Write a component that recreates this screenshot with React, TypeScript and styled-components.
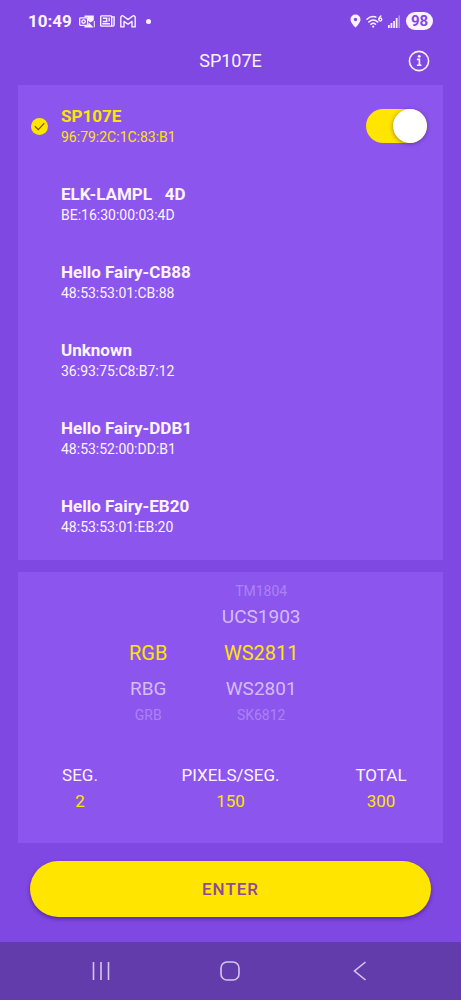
import { useState } from "react";
import styled, { createGlobalStyle } from "styled-components";

const color = {
  page: "#8048e3",
  panel: "#8c56ee",
  accent: "#ffe500",
  text: "#fcf3ff",
  nav: "#633cab",
  navIcon: "#d6c4f2",
};

const GlobalStyle = createGlobalStyle`
  *, *::before, *::after { box-sizing: border-box; }
  body {
    margin: 0;
    background: ${color.page};
    color: ${color.text};
    font-family: Roboto, "Liberation Sans", sans-serif;
  }
  button, input { font: inherit; color: inherit; }
  button { border: 0; padding: 0; background: none; cursor: pointer; }
`;

const Screen = styled.div`
  display: flex;
  flex-direction: column;
  min-height: 100vh;
`;

const StatusBar = styled.div`
  display: flex;
  align-items: center;
  justify-content: space-between;
  height: 42px;
  padding: 0 28px;
`;

const StatusGroup = styled.div`
  display: flex;
  align-items: center;
  gap: 5px;
`;

const Clock = styled.time`
  font: 700 17px/20px Roboto, sans-serif;
  margin-right: 2px;
`;

const Dot = styled.span`
  width: 5px;
  height: 5px;
  margin-left: 5px;
  border-radius: 50%;
  background: ${color.text};
`;

const Battery = styled.span`
  width: 27px;
  border-radius: 9px;
  background: ${color.text};
  color: ${color.page};
  font-size: 15px;
  font-weight: 700;
  line-height: 18px;
  text-align: center;
`;

const Header = styled.header`
  display: grid;
  grid-template-columns: 1fr auto 1fr;
  align-items: center;
  height: 38px;
  padding: 0 31px;
`;

const Title = styled.h1`
  grid-column: 2;
  margin: 0;
  font-size: 18px;
  font-weight: 400;
  line-height: 24px;
`;

const InfoButton = styled.button`
  display: flex;
  justify-self: end;
`;

const Main = styled.main`
  display: flex;
  flex-direction: column;
  gap: 12px;
  padding: 5px 18px 25px;
`;

const Panel = styled.section`
  background: ${color.panel};
`;

const DeviceList = styled.ul`
  margin: 0;
  padding: 2px 16px 5px 13px;
  list-style: none;
`;

const DeviceItem = styled.li`
  display: flex;
  align-items: center;
  height: 78px;
`;

const DeviceLabel = styled.label<{ $active: boolean }>`
  display: flex;
  flex: 1;
  align-items: center;
  gap: 13px;
  color: ${(p) => (p.$active ? color.accent : color.text)};
  cursor: pointer;
`;

const RadioMark = styled.span`
  display: grid;
  width: 17px;
  height: 17px;
  & > * { grid-area: 1 / 1; }
`;

const Radio = styled.input`
  appearance: none;
  width: 17px;
  height: 17px;
  margin: 0;
  border-radius: 50%;
  &:checked { background: ${color.accent}; }
  & + svg { visibility: hidden; }
  &:checked + svg { visibility: visible; }
`;

const DeviceText = styled.span`
  display: flex;
  flex-direction: column;
`;

const DeviceName = styled.span`
  font-size: 17px;
  font-weight: 700;
  line-height: 22px;
  white-space: pre;
`;

const DeviceAddress = styled.span`
  font-size: 14px;
  line-height: 20px;
`;

const Switch = styled.input`
  appearance: none;
  display: flex;
  width: 61px;
  height: 34px;
  margin: 0;
  border-radius: 17px;
  background: #6d3fc4;
  cursor: pointer;
  &::before {
    content: "";
    width: 34px;
    height: 34px;
    border-radius: 50%;
    background: #fff;
    box-shadow: 0 1px 4px rgba(60, 20, 110, 0.5);
  }
  &:checked {
    justify-content: flex-end;
    background: ${color.accent};
  }
`;

const Pickers = styled.div`
  display: grid;
  grid-template-columns: 1fr 113px 113px 1.7fr;
  align-items: end;
  padding-top: 11px;
`;

const Wheel = styled.div<{ $column: number }>`
  grid-column: ${(p) => p.$column};
  display: flex;
  flex-direction: column;
`;

const wheelSize = [20, 19, 14];
const wheelColor = [color.accent, "#d5bbf8", "#ab82f2"];

const WheelOption = styled.button<{ $distance: number }>`
  height: ${(p) => (p.$distance === 2 ? 16 : 36)}px;
  color: ${(p) => wheelColor[p.$distance]};
  font-size: ${(p) => wheelSize[p.$distance]}px;
  line-height: 16px;
`;

const Stats = styled.div`
  display: flex;
  justify-content: space-between;
  padding: 39px 13px 29px;
`;

const Stat = styled.div`
  display: flex;
  flex-direction: column;
  width: 98px;
  font-size: 17px;
  line-height: 26px;
  text-align: center;
`;

const StatInput = styled.input`
  width: 100%;
  height: 26px;
  padding: 0;
  border: 0;
  background: none;
  color: ${color.accent};
  text-align: center;
`;

const StatOutput = styled.output`
  color: ${color.accent};
`;

const EnterButton = styled.button`
  height: 56px;
  margin: 6px 12px 0;
  border-radius: 28px;
  background: ${color.accent};
  box-shadow: 0 2px 4px rgba(50, 15, 100, 0.55);
  color: #8d4a9c;
  font-size: 17px;
  font-weight: 500;
  letter-spacing: 1px;
`;

const NavBar = styled.nav`
  display: flex;
  align-items: center;
  justify-content: space-around;
  height: 58px;
  margin-top: auto;
  padding: 0 36px;
  background: ${color.nav};
`;

const NavButton = styled.button`
  display: flex;
  color: ${color.navIcon};
`;

const devices = [
  { name: "SP107E", address: "96:79:2C:1C:83:B1" },
  { name: "ELK-LAMPL   4D", address: "BE:16:30:00:03:4D" },
  { name: "Hello Fairy-CB88", address: "48:53:53:01:CB:88" },
  { name: "Unknown", address: "36:93:75:C8:B7:12" },
  { name: "Hello Fairy-DDB1", address: "48:53:52:00:DD:B1" },
  { name: "Hello Fairy-EB20", address: "48:53:53:01:EB:20" },
];

const orders = [
  { label: "RGB", distance: 0 },
  { label: "RBG", distance: 1 },
  { label: "GRB", distance: 2 },
];

const chips = [
  { label: "TM1804", distance: 2 },
  { label: "UCS1903", distance: 1 },
  { label: "WS2811", distance: 0 },
  { label: "WS2801", distance: 1 },
  { label: "SK6812", distance: 2 },
];

const OutlookIcon = () => (
  <svg width="16" height="13" viewBox="0 0 16 13" fill="none" stroke="currentColor">
    <path d="M5.500 2.200V.5h9.300v4.700l-3.300 2.300L9 5.500V2.200zM9.800 7.600l4.800 4.900H5.500v-1.800H9z" fill="currentColor" stroke="none" />
    <path d="M15.300 6v6.200" />
    <rect x="0.700" y="2.900" width="7.900" height="7.400" rx="0.800" fill={color.page} strokeWidth="1.300" />
    <circle cx="4.600" cy="6.600" r="1.700" strokeWidth="1.400" />
  </svg>
);

const NewsIcon = () => (
  <svg width="15" height="12" viewBox="0 0 15 12" fill="none" stroke="currentColor" strokeWidth="1.400">
    <rect x="0.700" y="0.900" width="11" height="10.200" rx="0.800" />
    <path d="M12 1.900h2.100v7.800c0 .8-.5 1.400-1.200 1.400h-1.500" />
    <path d="M2.800 3.300h3.900v3.200H2.800M2.300 8.700h7.700M9.200 2.600v4" />
  </svg>
);

const GmailIcon = () => (
  <svg width="16" height="13" viewBox="0 0 16 13" fill="none" stroke="currentColor" strokeWidth="1.400" strokeLinejoin="round">
    <path d="M.8 11.900V2.600C.8.900 2.400.3 3.600 1.200L8 4.600l4.400-3.400c1.200-.9 2.800-.3 2.800 1.400v9.300h-3.200V6.400L8 9.300 4 6.400v5.500z" />
  </svg>
);

const PinIcon = () => (
  <svg width="11" height="14" viewBox="0 0 11 14" fill="currentColor" fillRule="evenodd">
    <path d="M5.500.5a5 5 0 0 0-5 5c0 3.600 5 8 5 8s5-4.400 5-8a5 5 0 0 0-5-5zm0 3.300a1.700 1.700 0 1 1 0 3.400 1.700 1.700 0 0 1 0-3.400z" />
  </svg>
);

const WifiIcon = () => (
  <svg width="17" height="13" viewBox="0 0 17 13" fill="none" stroke="currentColor" strokeWidth="1.500" strokeLinecap="round">
    <path d="M1 4.300C3.400 1.900 6.500 1.100 9.800 2M2.900 6.900c2.600-2.300 6.100-2.300 8.700 0M4.900 9.200c1.400-1.200 3.200-1.200 4.600 0" />
    <circle cx="7.200" cy="11.600" r="1.100" fill="currentColor" stroke="none" />
    <circle cx="14.300" cy="4.500" r="1.500" strokeWidth="1.300" />
    <path d="M15 .9c-1.300.6-2.200 1.900-2.200 3.600" strokeWidth="1.300" />
  </svg>
);

const SignalIcon = () => (
  <svg width="13" height="13" viewBox="0 0 13 13" fill="currentColor">
    <path d="M0 10h1.700v3H0zM2.600 8h1.700v5H2.600zM5.200 6h1.700v7H5.200zM7.800 3h1.700v10H7.800z" />
    <path d="M10.400 0.500H12V13h-1.600z" opacity="0.400" />
  </svg>
);

const InfoIcon = () => (
  <svg width="22" height="22" viewBox="0 0 22 22" fill="none" stroke="currentColor">
    <circle cx="11" cy="11" r="9.600" strokeWidth="1.600" />
    <path d="M8.900 9.400h2.500v4.700c0 1 .7 1.300 2 .9M8.900 15.300h2.500" strokeWidth="1.600" />
    <circle cx="11.200" cy="6.300" r="1.400" fill="currentColor" stroke="none" />
  </svg>
);

const CheckIcon = () => (
  <svg width="17" height="17" viewBox="0 0 17 17" fill="none" stroke="#79521f" strokeWidth="1.200" pointerEvents="none">
    <path d="M3.900 8.300l3.400 3.300 6-6.400" />
  </svg>
);

export default function App() {
  const [device, setDevice] = useState(0);
  const [power, setPower] = useState(true);
  const [segments, setSegments] = useState("2");
  const [pixels, setPixels] = useState("150");

  return (
    <Screen>
      <GlobalStyle />
      <StatusBar>
        <StatusGroup>
          <Clock>10:49</Clock>
          <OutlookIcon />
          <NewsIcon />
          <GmailIcon />
          <Dot />
        </StatusGroup>
        <StatusGroup>
          <PinIcon />
          <WifiIcon />
          <SignalIcon />
          <Battery>98</Battery>
        </StatusGroup>
      </StatusBar>
      <Header>
        <Title>SP107E</Title>
        <InfoButton type="button" aria-label="Information">
          <InfoIcon />
        </InfoButton>
      </Header>
      <Main>
        <Panel>
          <DeviceList>
            {devices.map((item, index) => (
              <DeviceItem key={item.address}>
                <DeviceLabel $active={index === device}>
                  <RadioMark>
                    <Radio
                      type="radio"
                      name="device"
                      checked={index === device}
                      onChange={() => setDevice(index)}
                    />
                    <CheckIcon />
                  </RadioMark>
                  <DeviceText>
                    <DeviceName>{item.name}</DeviceName>
                    <DeviceAddress>{item.address}</DeviceAddress>
                  </DeviceText>
                </DeviceLabel>
                {index === device && (
                  <Switch
                    type="checkbox"
                    role="switch"
                    aria-label={`${item.name} power`}
                    checked={power}
                    onChange={(e) => setPower(e.target.checked)}
                  />
                )}
              </DeviceItem>
            ))}
          </DeviceList>
        </Panel>
        <Panel>
          <Pickers>
            <Wheel $column={2} role="listbox" aria-label="Colour order">
              {orders.map((o) => (
                <WheelOption key={o.label} type="button" role="option" aria-selected={o.distance === 0} $distance={o.distance}>
                  {o.label}
                </WheelOption>
              ))}
            </Wheel>
            <Wheel $column={3} role="listbox" aria-label="Chip type">
              {chips.map((o) => (
                <WheelOption key={o.label} type="button" role="option" aria-selected={o.distance === 0} $distance={o.distance}>
                  {o.label}
                </WheelOption>
              ))}
            </Wheel>
          </Pickers>
          <Stats>
            <Stat>
              <label htmlFor="segments">SEG.</label>
              <StatInput id="segments" inputMode="numeric" value={segments} onChange={(e) => setSegments(e.target.value)} />
            </Stat>
            <Stat>
              <label htmlFor="pixels">PIXELS/SEG.</label>
              <StatInput id="pixels" inputMode="numeric" value={pixels} onChange={(e) => setPixels(e.target.value)} />
            </Stat>
            <Stat>
              <label htmlFor="total">TOTAL</label>
              <StatOutput id="total" htmlFor="segments pixels">
                {Number(segments) * Number(pixels)}
              </StatOutput>
            </Stat>
          </Stats>
        </Panel>
        <EnterButton type="button">ENTER</EnterButton>
      </Main>
      <NavBar aria-label="System">
        <NavButton type="button" aria-label="Recent apps">
          <svg width="20" height="20" viewBox="0 0 20 20" fill="none" stroke="currentColor" strokeWidth="1.600">
            <path d="M2.500 1v18M10 1v18M17.500 1v18" />
          </svg>
        </NavButton>
        <NavButton type="button" aria-label="Home">
          <svg width="20" height="20" viewBox="0 0 20 20" fill="none" stroke="currentColor" strokeWidth="1.600">
            <rect x="1" y="1" width="18" height="18" rx="6" />
          </svg>
        </NavButton>
        <NavButton type="button" aria-label="Back">
          <svg width="20" height="20" viewBox="0 0 20 20" fill="none" stroke="currentColor" strokeWidth="1.600">
            <path d="M15.500 1L4.500 10l11 9" />
          </svg>
        </NavButton>
      </NavBar>
    </Screen>
  );
}
